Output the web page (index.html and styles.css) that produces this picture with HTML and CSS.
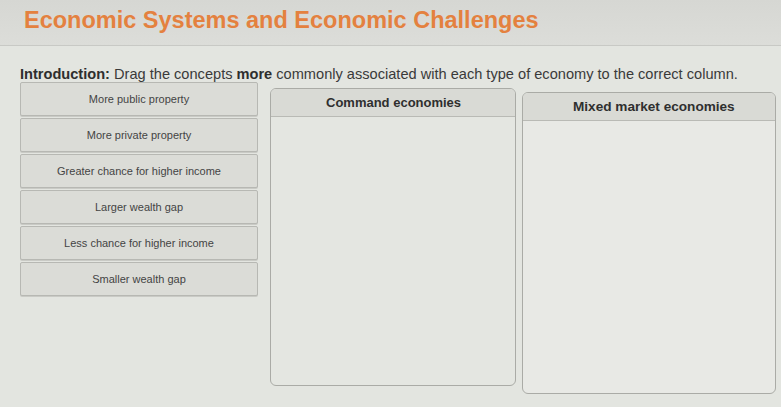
FILE: index.html
```html
<!DOCTYPE html>
<html>
<head>
<meta charset="utf-8">
<link rel="stylesheet" href="styles.css">
</head>
<body>
<header class="titlebar">
  <h1 class="title">Economic Systems and Economic Challenges</h1>
</header>
<main class="content">
  <p class="intro"><b>Introduction:</b> Drag the concepts <b>more</b> commonly associated with each type of economy to the correct column.</p>
  <div class="board">
    <div class="bank">
      <div class="card">More public property</div>
      <div class="card">More private property</div>
      <div class="card">Greater chance for higher income</div>
      <div class="card">Larger wealth gap</div>
      <div class="card">Less chance for higher income</div>
      <div class="card">Smaller wealth gap</div>
    </div>
    <div class="col col-command">
      <div class="col-head">Command economies</div>
      <div class="col-body"></div>
    </div>
    <div class="col col-mixed">
      <div class="col-head">Mixed market economies</div>
      <div class="col-body"></div>
    </div>
  </div>
</main>
</body>
</html>
```
FILE: styles.css
```css
html, body {
  margin: 0;
  padding: 0;
}
body {
  width: 781px;
  height: 407px;
  overflow: hidden;
  background: #e3e5e0;
  font-family: "Liberation Sans", Arial, sans-serif;
  color: #333;
}
.titlebar {
  height: 46px;
  background: linear-gradient(#d6d7d3, #dcddd9);
  border-bottom: 1px solid #c8c9c5;
  padding: 5px 0 0 24px;
  box-sizing: border-box;
}
.title {
  margin: 0;
  font-size: 23.5px;
  font-weight: bold;
  color: #e4813f;
  line-height: 30px;
}
.content {
  padding: 20px 0 0 20px;
}
.intro {
  margin: 0;
  font-size: 14.6px;
  line-height: 16px;
  color: #3a3a3a;
}
.intro b {
  color: #2e2e2e;
}
.board {
  display: flex;
  align-items: flex-start;
}
.bank {
  width: 238px;
  display: flex;
  flex-direction: column;
  gap: 2px;
}
.card {
  height: 34px;
  background: #dbdcd7;
  border: 1px solid #b7b8b3;
  border-radius: 2px;
  display: flex;
  align-items: center;
  justify-content: center;
  font-size: 11px;
  color: #444;
  box-sizing: border-box;
  box-shadow: 0 1px 0 #c9cac5;
}
.col {
  border: 1px solid #aaaba6;
  border-radius: 6px;
  box-sizing: border-box;
  overflow: hidden;
  background: #e4e6e1;
}
.col-command {
  width: 246px;
  height: 298px;
  margin-left: 12px;
  margin-top: 6px;
}
.col-mixed {
  width: 254px;
  height: 302px;
  margin-left: 6px;
  margin-top: 10px;
  background: #e8e9e5;
}
.col-head {
  height: 27px;
  background: #d9dad5;
  border-bottom: 1px solid #b9bab5;
  font-size: 13px;
  font-weight: bold;
  color: #2f2f2f;
  display: flex;
  align-items: center;
  justify-content: flex-start;
}
.col-command .col-head {
  padding-left: 55px;
}
.col-mixed .col-head {
  padding-left: 50px;
  font-size: 13.6px;
}
```
